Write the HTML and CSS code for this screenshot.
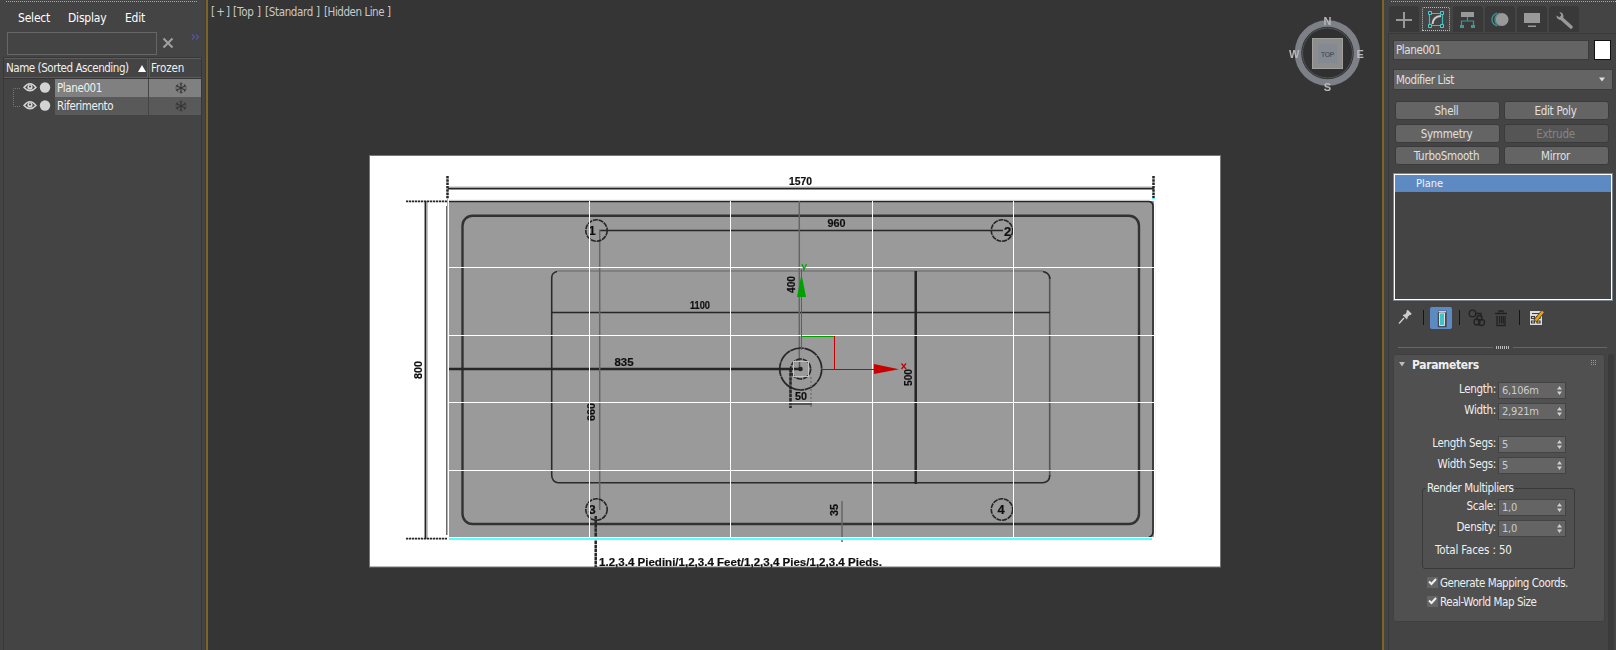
FILE: index.html
```html
<!DOCTYPE html>
<html lang="en">
<head>
<meta charset="utf-8">
<title>Scene editor</title>
<link rel="stylesheet" href="styles.css">
</head>
<body>
<div class="app">
  <aside class="explorer">
    <div class="grip"></div>
    <nav class="menu"><span class="m-select">Select</span><span class="m-display">Display</span><span class="m-edit">Edit</span></nav>
    <div class="search">
      <div class="search-box"></div>
      <svg class="clear" width="12" height="12" viewBox="0 0 12 12"><path d="M1.500 1.500L10.500 10.500M10.500 1.500L1.500 10.500" stroke="#a0a0a0" stroke-width="2"/></svg>
      <svg class="more" width="9" height="6" viewBox="0 0 9 6"><path d="M1 .5L3.500 3L1 5.500M5 .5L7.500 3L5 5.500" fill="none" stroke="#5656a0" stroke-width="1.100"/></svg>
    </div>
    <div class="table">
      <div class="thead">
        <div class="th th-name"><span>Name (Sorted Ascending)</span><svg width="8" height="7" viewBox="0 0 8 7"><path d="M4 0L8 7H0Z" fill="#fff"/></svg></div>
        <div class="th th-frozen">Frozen</div>
      </div>
      <div class="tbody">
        <svg class="tree" width="51" height="36" viewBox="4 79 51 36">
          <path d="M20 88.500H13.500V106.500H20" fill="none" stroke="#777" stroke-dasharray="1 1"/>
          <g id="vis"><path d="M24 87.500Q30 80 36 87.500Q30 94 24 87.500Z" fill="none" stroke="#d4d4d4" stroke-width="1.500"/><circle cx="30" cy="87" r="2.600" fill="#d4d4d4"/><circle cx="30" cy="86.500" r="1" fill="#444"/><circle cx="45" cy="87.500" r="5.200" fill="#d3d3d3"/></g>
          <use href="#vis" y="18"/>
        </svg>
        <div class="rows">
          <div class="row selected"><div class="cell name">Plane001</div><div class="cell frozen"><svg width="12" height="12" viewBox="0 0 12 12"><g id="flake" fill="none" stroke="#353535"><path d="M6 .5V11.500M1 3.500L11 8.500M11 3.500L1 8.500" stroke-width="1.200"/><path d="M4.300 1L6 2.700L7.700 1M4.300 11L6 9.300L7.700 11M.5 5.300L2.800 4.500L2.500 2M11.500 5.300L9.200 4.500L9.500 2M.5 6.700L2.800 7.500L2.500 10M11.500 6.700L9.200 7.500L9.500 10" stroke-width=".700"/></g></svg></div></div>
          <div class="row"><div class="cell name">Riferimento</div><div class="cell frozen"><svg width="12" height="12" viewBox="0 0 12 12"><use href="#flake"/></svg></div></div>
        </div>
      </div>
    </div>
  </aside>

  <main class="viewport">
    <svg class="scene" width="1174" height="650" viewBox="208 0 1174 650">
      <defs>
        <filter id="soft" x="-5%" y="-5%" width="110%" height="110%"><feGaussianBlur stdDeviation="0.500"/></filter>
        <filter id="softer" x="-5%" y="-5%" width="110%" height="110%"><feGaussianBlur stdDeviation="0.700"/></filter>
      </defs>
      <g class="vp-label"><text x="211" y="16" textLength="19">[+]</text><text x="233" y="16" textLength="28">[Top ]</text><text x="265" y="16" textLength="55">[Standard ]</text><text x="324" y="16" textLength="67">[Hidden Line ]</text></g>

      <rect x="369.500" y="155.500" width="851" height="411.500" fill="#fff" stroke="#777"/>
      <rect x="448.500" y="201" width="706" height="336.500" fill="#9a9a9a"/>

      <!-- blueprint linework -->
      <g filter="url(#soft)" fill="none" stroke="#252525" stroke-width="1.600">
        <path d="M448 188.500H1154M425.500 201V539" stroke-width="1.900"/>
        <path d="M448 186.800H1154" stroke="#ccc" stroke-width="1"/>
        <path d="M427.200 201V539" stroke="#aaa" stroke-width="1"/>
        <path d="M447.500 176V199M1153.500 176V199" stroke-width="2.500" stroke-dasharray="2.500 .800"/>
        <path d="M406 201.300H447M406 538.700H447" stroke-width="1.800" stroke-dasharray="2.300 .700"/>
        <path d="M449 201.500H1149Q1153 202 1153 206V532Q1153 536 1149 537"/>
        <path d="M447 206V535" stroke="#444"/>
        <rect x="462.500" y="215.700" width="676.500" height="308.300" rx="10" stroke="#333" stroke-width="2.400"/>
        <path d="M557 271H1043" stroke="#777"/>
        <path d="M1049.700 277V476" stroke="#555"/>
        <path d="M557 271.500Q551.700 272.500 551.700 278V475Q552 482 558 482.700H1043Q1050 482 1049.700 475M1043 271.500Q1050 273 1049.700 279" stroke="#2c2c2c"/>
        <path d="M551 312.500H1050M599 230.500H1003" stroke-width="1.500"/>
        <path d="M449 369H802M915.700 271V484" stroke-width="2.500"/>
        <path d="M599.700 230V510M799.300 201V361M842 501V542" stroke="#666" stroke-width="1.500"/>
        <g stroke-dasharray="5 .800"><circle cx="596.500" cy="230.500" r="10.700"/><circle cx="1002" cy="230.500" r="10.700"/><circle cx="596.500" cy="509.500" r="10.700"/><circle cx="1002" cy="509.500" r="10.700"/></g>
        <circle cx="800.700" cy="369" r="21" stroke-width="1.700" stroke-dasharray="14 .600"/>
        <circle cx="800.700" cy="369" r="10" stroke-width="1.700" stroke-dasharray="6 1"/>
        <path d="M790.500 369V408M595.700 516V567" stroke-width="2.500" stroke-dasharray="3.500 .600"/>
        <path d="M790 404H812" stroke="#444"/>
        <path d="M811 377V408" stroke="#777" stroke-dasharray="2 2"/>
        <path d="M799.500 369V361" stroke="#555"/><circle cx="800.500" cy="369" r="1.500" fill="#222"/>
      </g>
      <g class="dims" filter="url(#softer)">
        <text x="789" y="184.500" textLength="23" lengthAdjust="spacingAndGlyphs">1570</text>
        <text x="827.500" y="226.500" textLength="18" lengthAdjust="spacingAndGlyphs">960</text>
        <text x="690" y="308.500" textLength="20" lengthAdjust="spacingAndGlyphs">1100</text>
        <text x="614.500" y="366" textLength="19" lengthAdjust="spacingAndGlyphs">835</text>
        <text x="795" y="400" textLength="12" lengthAdjust="spacingAndGlyphs">50</text>
        <text transform="translate(422 379) rotate(-90)" textLength="18" lengthAdjust="spacingAndGlyphs">800</text>
        <text transform="translate(795 293) rotate(-90)" textLength="17" lengthAdjust="spacingAndGlyphs">400</text>
        <text transform="translate(595 421) rotate(-90)" textLength="18" lengthAdjust="spacingAndGlyphs">660</text>
        <text transform="translate(912 386) rotate(-90)" textLength="17" lengthAdjust="spacingAndGlyphs">500</text>
        <text transform="translate(838 516) rotate(-90)" textLength="12" lengthAdjust="spacingAndGlyphs">35</text>
        <text class="num" x="588.500" y="234.500">1</text><text class="num" x="1004" y="235.500">2</text><text class="num" x="588.500" y="513.500">3</text><text class="num" x="997.500" y="514">4</text>
        <text class="feet" x="599" y="565.500" textLength="283" lengthAdjust="spacingAndGlyphs">1.2,3.4 Piedini/1,2,3.4 Feet/1,2,3,4 Pies/1,2,3.4 Pieds.</text>
      </g>

      <!-- plane segments and selection edges -->
      <g shape-rendering="crispEdges">
        <path d="M449 199.500H1154M1155.500 200V538" stroke="#dcffff"/>
        <path d="M447.500 198V535" stroke="#35e4ec"/><path d="M448.500 200V537" stroke="#fff"/>
        <path d="M1152 198.500H1155" stroke="#5ff"/>
        <path d="M449 539H1152" stroke="#5ff" stroke-width="2"/>
        <path d="M589.500 201V537M730.500 201V537M872.500 201V537M1013.500 201V537M449 267.500H1154M449 335.500H1154M449 402.500H1154M449 470.500H1154M1154.500 201V538M449 537.500H1154" stroke="#fff"/>
        <rect x="793.500" y="361.500" width="15" height="15" fill="none" stroke="#c4c4c4"/>
        <path d="M801.500 269V350M801 336.500H834" stroke="#00a000"/>
        <path d="M834.500 336V369M821 369.500H876" stroke="#c80000"/>
      </g>
      <path d="M801.500 274L806 297H797Z" fill="#00a000"/><path d="M874 364V374L899 369.300Z" fill="#c80000"/>
      <path d="M802 264L804 269M806.500 264L803.300 271" fill="none" stroke="#00a000" stroke-width="1.200"/>
      <path d="M901.500 363.500L906 369M906 363.500L901.500 369" stroke="#c80000" stroke-width="1.200"/>

      <!-- view cube -->
      <circle cx="1327.500" cy="53" r="29.500" fill="#303030" stroke="#7d8187" stroke-width="6.500"/>
      <circle cx="1327.500" cy="53" r="25" fill="none" stroke="#525459" stroke-width="1"/>
      <rect x="1312.500" y="38.500" width="30" height="30" fill="#8d8d8d" stroke="#a0a0a0"/>
      <rect x="1318" y="44" width="19" height="19" fill="#858991"/>
      <text class="cube" x="1321" y="56.500" textLength="13.500">TOP</text>
      <g class="compass"><text x="1323.500" y="25">N</text><text x="1323.700" y="90.500">S</text><text x="1289" y="58">W</text><text x="1356.500" y="58">E</text></g>
    </svg>
  </main>

  <aside class="command">
    <div class="grip"></div>
    <div class="tabs">
      <div class="tab"><svg width="30" height="26" viewBox="0 0 30 26"><path d="M15 6V22M7 14H23" stroke="#999" stroke-width="2"/></svg></div>
      <div class="tab active"><svg width="30" height="26" viewBox="0 0 30 26"><path d="M8.500 7.500H21.500V19.500H8.500Z" fill="none" stroke="#3fbcba" stroke-width="1.200"/><g fill="#444" stroke="#45cecc"><path d="M7.500 5.500h3v3h-3zM19.500 5.500h3v3h-3zM7.500 18.500h3v3h-3zM19.500 18.500h3v3h-3z"/></g><path d="M11.500 18Q12 10.500 20 10" fill="none" stroke="#ccc" stroke-width="2"/></svg></div>
      <div class="tab"><svg width="30" height="26" viewBox="0 0 30 26"><path d="M8 6h13v5H8z" fill="#999"/><path d="M14.500 11v4M8.500 20v-5h12v5" fill="none" stroke="#439693" stroke-width="1.200"/><path d="M7 19h4v3H7zM18 19h4v3h-4z" fill="#439693"/></svg></div>
      <div class="tab"><svg width="30" height="26" viewBox="0 0 30 26"><circle cx="17" cy="13.500" r="6.500" fill="#999"/><path d="M12 7Q7 9 7 13.500T12 20M15 7Q10 9 10 13.500T15 20" fill="none" stroke="#439693" stroke-width="1.300"/></svg></div>
      <div class="tab"><svg width="30" height="26" viewBox="0 0 30 26"><path d="M7 7h16v10H7zM11 19.500h8v1.500h-8z" fill="#999"/></svg></div>
      <div class="tab"><svg width="30" height="26" viewBox="0 0 30 26"><path d="M12.500 12.500L22 21" stroke="#999" stroke-width="3.500" stroke-linecap="round"/><path d="M7.300 9.500Q8 14.500 13.500 14L14.500 10.500Q14.300 6.300 10.500 6L12.300 9.300L10.500 11.300Z" fill="#999"/></svg></div>
    </div>
    <div class="panel">
      <div class="name-row"><div class="field">Plane001</div><div class="swatch"></div></div>
      <div class="dropdown"><span>Modifier List</span><svg width="6" height="5" viewBox="0 0 6 5"><path d="M0 .5H6L3 4.500Z" fill="#ddd"/></svg></div>
      <div class="buttons">
        <div class="btn">Shell</div><div class="btn">Edit Poly</div>
        <div class="btn">Symmetry</div><div class="btn disabled">Extrude</div>
        <div class="btn">TurboSmooth</div><div class="btn">Mirror</div>
      </div>
      <div class="stack"><div class="stack-item">Plane</div></div>
      <div class="tools">
        <svg width="220" height="24" viewBox="1393 306 220 24">
          <path d="M1399 323.500L1404 318" stroke="#d0d0d0" stroke-width="1.300"/><path d="M1402.500 315L1407 319.500L1408 316.500L1411 314L1407.500 310.500L1405.500 314Z" fill="#ccc"/><path d="M1407 310.500L1411 314.500" stroke="#ccc" stroke-width="2"/>
          <path d="M1423.500 310V325M1459.500 310V325M1519.500 310V325" stroke="#151515" shape-rendering="crispEdges"/>
          <rect x="1430" y="307" width="22" height="22" rx="2" fill="#5e8ac3"/>
          <path d="M1438 312H1446.500M1439 313V326H1445.500V313" fill="none" stroke="#454a50" stroke-width="2.500"/><path d="M1439.500 313H1444.500V325.500H1439.500Z" fill="#3fc3c8" stroke="#ddd"/><path d="M1438.500 311.700H1446" stroke="#ddd" stroke-width="1.200"/>
          <g fill="none" stroke="#222" stroke-width="1.300"><circle cx="1472.500" cy="313.500" r="3.300"/><path d="M1476 313.500H1481V317"/><circle cx="1477" cy="322" r="3"/><circle cx="1481.500" cy="322.500" r="3"/><circle cx="1479.500" cy="318" r="2.500"/></g>
          <g fill="none" stroke="#222" stroke-width="1.300"><path d="M1495 313.500H1507M1499 312.500V311H1503V312.500M1497 316V325.500H1505V316M1499.500 316V323.500M1501.500 316V323.500M1503.300 316V323.500"/></g>
          <path d="M1530 311h12v14h-12z" fill="#ddd"/><path d="M1532 313.500h8M1531.500 316.500h3v2h-3zM1537 316.500h3v2h-3zM1531.500 321h3v2h-3zM1537 321h3v2h-3z" fill="none" stroke="#3d3d3d" stroke-width="1.200"/><path d="M1535 321L1543 311.500" stroke="#444" stroke-width="4"/><path d="M1535.500 320.500L1543 311.500" stroke="#f5a500" stroke-width="2.500"/>
        </svg>
      </div>
      <div class="splitter"><i></i><b></b><i></i></div>
      <div class="rollouts">
        <section class="rollout">
          <div class="roll-head"><svg width="6" height="5" viewBox="0 0 6 5"><path d="M0 0H6L3 4.500Z" fill="#bbb"/></svg><h2>Parameters</h2><span class="dots"></span></div>
          <div class="param p1"><label>Length:</label><div class="spin">6,106m</div></div>
          <div class="param p2"><label>Width:</label><div class="spin">2,921m</div></div>
          <div class="param p3"><label>Length Segs:</label><div class="spin">5</div></div>
          <div class="param p4"><label>Width Segs:</label><div class="spin">5</div></div>
          <fieldset class="group">
            <legend>Render Multipliers</legend>
            <div class="param"><label>Scale:</label><div class="spin">1,0</div></div>
            <div class="param"><label>Density:</label><div class="spin">1,0</div></div>
            <p>Total Faces : 50</p>
          </fieldset>
          <div class="check"><span class="box"><svg width="9" height="8" viewBox="0 0 9 8"><path d="M1 3.500L3.500 6L8 1" fill="none" stroke="#eee" stroke-width="2"/></svg></span><span>Generate Mapping Coords.</span></div>
          <div class="check c2"><span class="box"><svg width="9" height="8" viewBox="0 0 9 8"><path d="M1 3.500L3.500 6L8 1" fill="none" stroke="#eee" stroke-width="2"/></svg></span><span>Real-World Map Size</span></div>
        </section>
        <div class="scrollbar"></div>
      </div>
    </div>
  </aside>
</div>
</body>
</html>
```
FILE: styles.css
```css
* { box-sizing: border-box; }
body { margin: 0; background: #353535; color: #f0f0f0; font: 11px/14px "DejaVu Sans Condensed", "DejaVu Sans", sans-serif; font-stretch: condensed; white-space: nowrap; overflow: hidden; }
svg { display: block; flex: none; }
.app { display: grid; grid-template-columns: 206px 1178px 232px; width: 1616px; height: 650px; }
.grip { height: 1px; background: repeating-linear-gradient(90deg, #aaa 0 1px, transparent 1px 2px); }

/* scene explorer */
.explorer { background: #444; padding: 1px 0 0 3px; border-right: 1px solid #3b3b3b; display: flex; flex-direction: column; }
.explorer .grip { margin: 0 7px 0 3px; }
.menu { display: flex; height: 30px; padding: 9px 0 0 15px; font-size: 12px; letter-spacing: -.2px; color: #fff; }
.menu span { display: block; }
.m-select { width: 50px; }
.m-display { width: 57px; }
.search { display: flex; height: 25px; padding-left: 4px; }
.search-box { width: 150px; height: 23px; border: 1px solid #666; }
.clear { margin: 5px 0 0 5px; }
.more { margin: 2px 0 0 17px; }
.table { width: 199px; flex: 1; border: 1px solid #383838; border-bottom: 0; }
.thead { display: flex; height: 21px; font-size: 11.500px; letter-spacing: -.45px; line-height: 19px; border-bottom: 1px solid #353535; }
.th { border-top: 1px solid #5c5c5c; border-bottom: 1px solid #5c5c5c; }
.th-name { width: 144px; display: flex; align-items: center; justify-content: space-between; padding: 0 1px 0 2px; border-right: 1px solid #5c5c5c; }
.th-frozen { flex: 1; border-left: 1px solid #5c5c5c; margin-left: 1px; padding-left: 1px; letter-spacing: -.1px; }
.tbody { display: flex; }
.rows { flex: 1; }
.row { display: flex; height: 18px; gap: 1px; line-height: 18px; font-size: 11.500px; letter-spacing: -.4px; }
.cell { background: #595959; }
.cell.name { width: 93px; padding-left: 2px; }
.cell.frozen { flex: 1; padding: 3px 0 0 26px; }
.selected .cell { background: #808080; }

/* viewport */
.viewport { border-left: 2px solid #7d652a; border-right: 2px solid #7d652a; background: #353535; }
.vp-label { font-size: 11.500px; fill: #c9c9c9; }
.dims { font: bold 10.500px "Liberation Sans", Arial, sans-serif; fill: #111; stroke: #111; stroke-width: .2px; }
.dims .num { font-size: 13px; }
.dims .feet { font-size: 11px; }
.cube { font: bold 7px "Liberation Sans", Arial, sans-serif; fill: #53565c; }
.compass { font: bold 11px "Liberation Sans", Arial, sans-serif; fill: #b9b9b9; }

/* command panel */
.command { background: #444; padding: 1px 0 0 4px; }
.command .grip { margin-left: 3px; }
.tabs { display: flex; height: 31px; padding: 4px 0 0 1px; gap: 2px; }
.tab { width: 30px; height: 26px; background: #393939; border-radius: 3px 3px 0 0; }
.tab.active { background: #444; outline: 1px dotted #bbb; outline-offset: -2px; }
.panel { border-left: 1px solid #3a3a3a; border-top: 1px solid #3a3a3a; padding: 6px 0 0 4px; height: 617px; color: #e0e0e0; }
.name-row { display: flex; gap: 5px; height: 20px; }
.field { width: 196px; border: 1px solid #3c3c3c; background: #646464; padding-left: 2px; line-height: 19px; font-size: 11.500px; letter-spacing: -.4px; }
.swatch { width: 17px; height: 20px; background: #fff; border: 1px solid #111; }
.dropdown { margin-top: 9px; width: 220px; height: 21px; border: 1px solid #3c3c3c; background: #646464; padding: 0 7px 0 2px; display: flex; align-items: center; justify-content: space-between; font-size: 11.500px; letter-spacing: -.4px; }
.buttons { display: grid; grid-template-columns: 105px 105px; grid-template-rows: 19px 19px 19px; gap: 3.500px 4px; margin: 11px 0 0 2px; }
.btn { background: #646464; border: 1px solid #3b3b3b; border-radius: 3px; text-align: center; line-height: 18px; font-size: 11.500px; letter-spacing: -.25px; padding-right: 2px; }
.btn.disabled { background: #555; color: #858585; }
.stack { width: 220px; height: 128px; border: 2px solid #fff; outline: 1px solid #7b838e; outline-offset: -1px; margin-top: 8px; }
.stack-item { background: #5e8ac3; border-bottom: 1px solid #808080; height: 17px; line-height: 18px; padding-left: 21px; color: #f4f4f4; }
.tools { margin-top: 5px; height: 24px; }
.splitter { display: flex; height: 24px; align-items: center; padding: 11px 9px 0 5px; gap: 3px; }
.splitter i { flex: 1; height: 1px; background: #666; }
.splitter b { width: 14px; height: 3px; background: repeating-linear-gradient(90deg, #bbb 0 1px, transparent 1px 2px); }
.rollouts { display: flex; gap: 3px; height: 296px; }
.rollout { width: 212px; height: 268px; background: #505050; border: 1px solid #404040; border-radius: 3px; color: #efefef; }
.scrollbar { width: 6px; background: #3b3b3b; border-radius: 3px 3px 0 0; }
.roll-head { display: flex; align-items: center; height: 19px; padding-left: 5px; }
.roll-head h2 { margin: 0 0 0 7px; font-size: 12px; line-height: 18px; font-weight: bold; letter-spacing: -.35px; width: 179px; }
.dots { width: 6px; height: 6px; background: conic-gradient(transparent 75%, #999 0) 0 0 / 2px 2px; margin-bottom: 3px; }
.param { display: flex; height: 17px; line-height: 15px; }
.param label { width: 102px; text-align: right; margin-right: 2px; font-size: 11.500px; letter-spacing: -.3px; }
.spin { width: 68px; height: 17px; background: linear-gradient(#646464, #646464) padding-box; border: 1px solid #434343; padding-left: 3px; color: #ccc; display: flex; justify-content: space-between; align-items: center; letter-spacing: -.2px; }
.spin::after { content: ""; width: 5px; height: 9px; margin-right: 3px; background: #d0d0d0; clip-path: polygon(50% 0, 100% 40%, 0 40%, 0 60%, 100% 60%, 50% 100%, 0 60%, 0 40%); }
.p1 { margin-top: 8px; }
.p2 { margin-top: 4px; }
.p3 { margin-top: 16px; }
.p4 { margin-top: 4px; }
.group { width: 153px; height: 88px; margin: 7px 0 0 28px; padding: 0; border: 1px solid #393939; border-radius: 3px; min-width: 0; }
.group legend { padding: 0 1px; margin-left: 3px; height: 14px; line-height: 14px; font-size: 11.500px; letter-spacing: -.4px; }
.group .param { margin-top: 4px; }
.group .param label { width: 73px; }
.group p { margin: 6px 0 0 12px; font-size: 11.500px; letter-spacing: -.15px; }
.check { display: flex; align-items: center; gap: 2px; height: 14px; margin: 6px 0 0 33px; font-size: 11.500px; letter-spacing: -.44px; }
.check > span:last-child { padding-top: 2px; }
.check.c2 { margin-top: 5px; }
.box { width: 11px; height: 11px; background: #646464; padding: 1px; }
```
